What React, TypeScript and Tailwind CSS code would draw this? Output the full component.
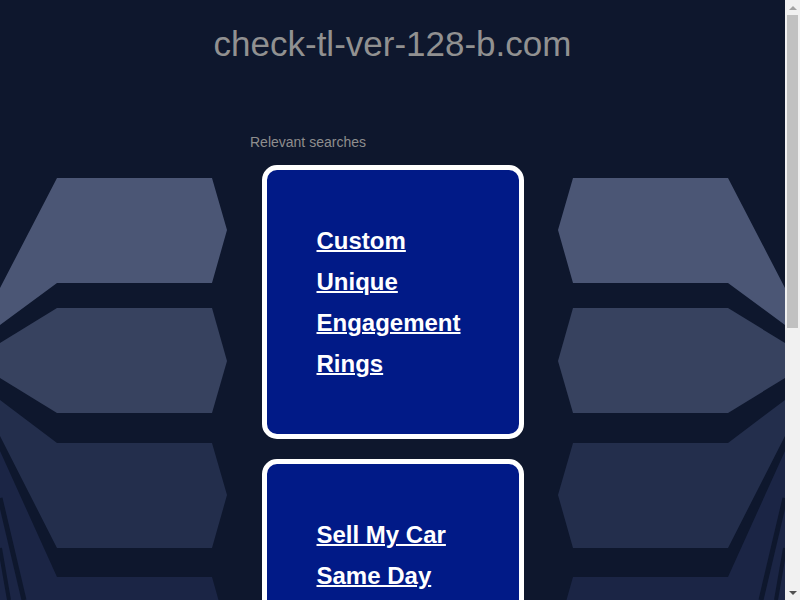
import React from 'react';

const leftShapes: { points: string; fill: string }[] = [
  { points: '0,451 57,577 212,577 227,630 212,683 57,683 0,700', fill: '#1b2545' },
  { points: '0,288 57,178 212,178 227,230 212,283 57,283 0,325', fill: '#4b5675' },
  { points: '0,343 57,308 212,308 227,361 212,413 57,413 0,378', fill: '#37425f' },
  { points: '0,400 57,443 212,443 227,495 212,548 57,548 0,436', fill: '#232e4c' },
];

const Side: React.FC = () => (
  <>
    {leftShapes.map((s, i) => (
      <polygon key={i} points={s.points} fill={s.fill} />
    ))}
    <line x1="0" y1="498" x2="24" y2="600" stroke="#0e172d" strokeWidth="5" />
    <line x1="0" y1="548" x2="9" y2="600" stroke="#0e172d" strokeWidth="4" />
  </>
);

const Backdrop: React.FC = () => (
  <svg className="absolute left-0 top-0 w-[785px] h-[700px]" viewBox="0 0 785 700">
    <g>
      <Side />
    </g>
    <g transform="translate(785 0) scale(-1 1)">
      <Side />
    </g>
  </svg>
);

const SearchBox: React.FC<{ label: string }> = ({ label }) => (
  <div className="w-[262px] mx-auto border-[5px] border-white rounded-[15px] bg-[#011a87] pl-[50px] pr-[40px] pt-[50px] pb-[50px]">
    <a href="#" className="text-white text-[24px] font-bold leading-[41px] underline decoration-2">
      {label}
    </a>
  </div>
);

const Scrollbar: React.FC = () => (
  <div className="w-[15px] h-full bg-[#f1f1f1] flex flex-col items-center shrink-0">
    <div className="h-[15px] w-full flex items-center justify-center">
      <div className="w-0 h-0 border-l-[4px] border-r-[4px] border-b-[4px] border-l-transparent border-r-transparent border-b-[#a3a3a3]" />
    </div>
    <div className="w-[11px] h-[313px] bg-[#c1c1c1]" />
    <div className="flex-1" />
    <div className="h-[15px] w-full flex items-center justify-center">
      <div className="w-0 h-0 border-l-[4px] border-r-[4px] border-t-[4px] border-l-transparent border-r-transparent border-t-[#505050]" />
    </div>
  </div>
);

export default function App() {
  const searches = ['Custom Unique Engagement Rings', 'Sell My Car Same Day', 'Diamond Rings For Women'];

  return (
    <div className="flex h-screen w-full overflow-hidden bg-[#0e172d]" style={{ fontFamily: '"Liberation Sans", Arial, sans-serif' }}>
      <div className="relative w-[785px] h-full overflow-hidden shrink-0">
        <Backdrop />
        <div className="relative">
          <h1 className="pt-[24px] text-center text-[35px] leading-[40px] text-[#919191]">check-tl-ver-128-b.com</h1>
          <div className="w-[285px] mx-auto mt-[70px]">
            <p className="text-[14px] leading-[16px] text-[#8e8e8e]">Relevant searches</p>
            <div className="mt-[15px] flex flex-col gap-[20px]">
              {searches.map((s) => (
                <SearchBox key={s} label={s} />
              ))}
            </div>
          </div>
        </div>
      </div>
      <Scrollbar />
    </div>
  );
}
